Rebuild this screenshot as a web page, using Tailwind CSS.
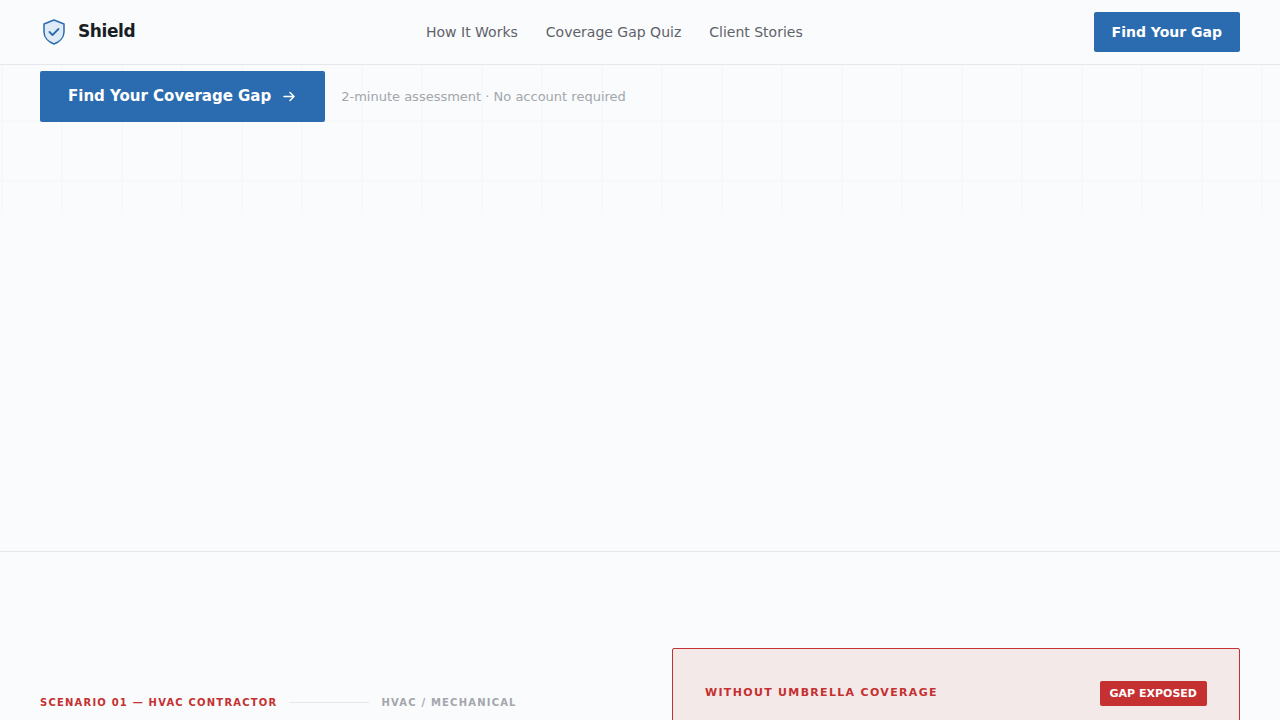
<!DOCTYPE html>
<html lang="en">

<head>
    <meta charset="UTF-8">
    <meta name="viewport" content="width=device-width, initial-scale=1.0">
    <title>Shield</title>
    <script src="https://cdn.jsdelivr.net/npm/@tailwindcss/browser@4"></script>
</head>

<body class="bg-[#f9fbfd] text-[#1a1d24] font-['DejaVu_Sans',sans-serif] min-h-screen overflow-x-hidden">
    <header class="sticky top-0 z-10 bg-[#f9fbfd] border-b border-[#e4e7eb]">
        <div class="flex items-center justify-between h-16 px-10">
            <a href="#" class="flex items-center gap-2.5 text-[17px] font-bold tracking-tight">
                <svg class="size-7" viewBox="0 0 28 28" fill="none" aria-hidden="true">
                    <path d="M14 2L24 6V14C24 19.5 19.5 24 14 26C8.5 24 4 19.5 4 14V6Z" fill="#dfeaf7" stroke="#2b6cb0" stroke-width="1.5" stroke-linejoin="round" />
                    <path d="M9.5 14L12.5 17L18.5 11" stroke="#2b6cb0" stroke-width="1.8" stroke-linecap="round" stroke-linejoin="round" />
                </svg>
                Shield
            </a>
            <nav class="flex gap-7 text-sm text-[#5f6268]">
                <a href="#how" class="hover:text-black">How It Works</a>
                <a href="#quiz" class="hover:text-black">Coverage Gap Quiz</a>
                <a href="#stories" class="hover:text-black">Client Stories</a>
            </nav>
            <button type="button" class="h-10 px-[18px] rounded-xs bg-[#2b6cb0] text-white text-sm font-bold cursor-pointer">Find Your Gap</button>
        </div>
    </header>

    <main>
        <section class="relative min-h-[148px] px-10 pt-1.5">
            <svg class="absolute inset-0 size-full" aria-hidden="true">
                <defs>
                    <pattern id="grid" width="60" height="60" patternUnits="userSpaceOnUse" x="1" y="55">
                        <path d="M0 1H60M1 0V60" stroke="#f6f8fa" stroke-width="2" fill="none" />
                    </pattern>
                </defs>
                <rect width="100%" height="100%" fill="url(#grid)" />
            </svg>
            <div class="relative flex items-center gap-4">
                <button type="button" class="flex items-center gap-2.5 h-[51px] px-7 rounded-xs bg-[#2b6cb0] text-white text-[15px] font-bold cursor-pointer">
                    Find Your Coverage Gap
                    <svg class="size-4" viewBox="0 0 16 16" fill="none" stroke="currentColor" stroke-width="1.5" stroke-linecap="round" stroke-linejoin="round" aria-hidden="true">
                        <path d="M3 7.5H13M9 3.5L13 7.5L9 11.5" />
                    </svg>
                </button>
                <span class="text-[13px] leading-4 text-[#a3a6ab]">2-minute assessment · No account required</span>
            </div>
        </section>

        <section id="how" class="mt-[338px] border-t border-[#e4e7eb] px-10 pt-24">
            <div class="grid grid-cols-2 gap-16">
                <div class="flex items-center gap-3 h-[108px] text-[10px] font-bold tracking-[0.12em]">
                    <span class="text-[#c53030]">SCENARIO 01 — HVAC CONTRACTOR</span>
                    <span class="w-20 h-px bg-[#e4e7eb]"></span>
                    <span class="text-[#a3a6ab]">HVAC / MECHANICAL</span>
                </div>
                <article class="rounded-xs border border-[#c53030] bg-[#f4e9e9] p-8">
                    <div class="flex items-center justify-between">
                        <h2 class="text-[11px] font-bold tracking-[0.12em] text-[#c53030]">WITHOUT UMBRELLA COVERAGE</h2>
                        <span class="rounded-xs bg-[#c53030] px-2.5 py-1 text-[11px] leading-[17px] font-bold text-white">GAP EXPOSED</span>
                    </div>
                </article>
            </div>
        </section>
    </main>
</body>

</html>
